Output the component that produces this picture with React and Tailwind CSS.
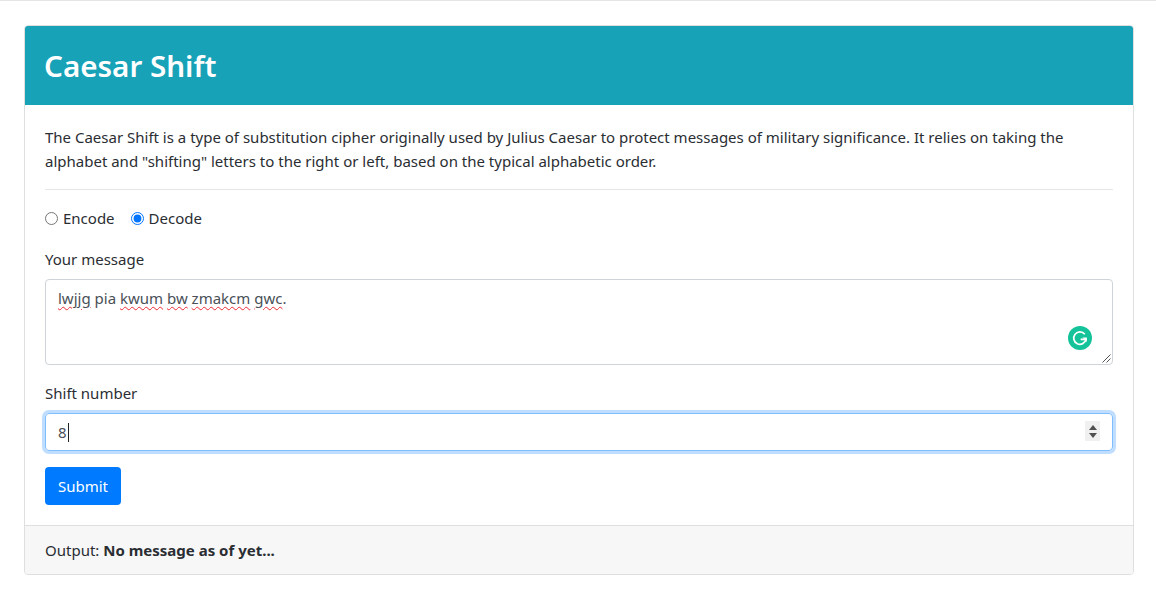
import React from "react"

const wavy = "underline decoration-wavy decoration-[#ee2b36] decoration-[1.2px] underline-offset-[2px]"

const GrammarlyIcon = () => (
  <svg width="24" height="24" viewBox="0 0 24 24" className="absolute right-[20px] top-[46px]">
    <circle cx="12" cy="12" r="12" fill="#15c39a" />
    <path d="M16.8 8.2A6.2 6.2 0 1 0 18 13.4h-5.4" fill="none" stroke="#fff" strokeWidth="1.7" />
    <path d="M14.4 11.6h4.4v4.4z" fill="#fff" />
  </svg>
)

const ResizeHandle = () => (
  <svg width="10" height="10" viewBox="0 0 10 10" className="absolute right-[1px] bottom-[1px]">
    <path d="M1.5 9.5L9.5 1.5M5.5 9.5L9.5 5.5" stroke="#555" strokeWidth="1" fill="none" />
  </svg>
)

const Spinner = () => (
  <div className="absolute right-[12px] top-[7px] flex h-[20px] w-[15px] flex-col items-center justify-center gap-[3px] bg-[#f0f0f0]">
    <svg width="8" height="5" viewBox="0 0 8 5"><path d="M4 0L8 5H0z" fill="#505050" /></svg>
    <svg width="8" height="5" viewBox="0 0 8 5"><path d="M0 0h8L4 5z" fill="#505050" /></svg>
  </div>
)

export default function App() {
  return (
    <div className="min-h-[596px] border-t border-[#e5e5e5] bg-white pl-6 pr-[22px] pt-6 text-[15px] leading-6 text-[#2a2e33] font-['Noto_Sans',sans-serif]">
      <div className="overflow-hidden rounded border border-[#dfdfdf]">
        {/* Header */}
        <div className="flex h-[79px] items-center bg-[#17a2b8] px-5">
          <h1 className="-ml-px text-[29.6px] font-semibold text-white">Caesar Shift</h1>
        </div>

        {/* Body */}
        <div className="px-5 pt-5 pb-5">
          <p>
            The Caesar Shift is a type of substitution cipher originally used by Julius Caesar to protect messages of military significance. It relies on taking the alphabet and "shifting" letters to the right or left, based on the typical alphabetic order.
          </p>
          <hr className="mt-4 mb-4 border-[#e6e6e6]" />

          <div className="flex items-center">
            <label className="flex items-center">
              <input type="radio" name="mode" readOnly className="m-0 h-[13px] w-[13px] accent-[#0075ff]" />
              <span className="ml-[5px]">Encode</span>
            </label>
            <label className="ml-4 flex items-center">
              <input type="radio" name="mode" checked readOnly className="m-0 h-[13px] w-[13px] accent-[#0075ff]" />
              <span className="ml-[5px]">Decode</span>
            </label>
          </div>

          <div className="mt-[17px]">
            <div className="mb-2">Your message</div>
            <div className="relative h-[86px] rounded border border-[#ced4da] px-3 py-[6px] text-[#495057]">
              <span className={wavy}>lwjjg</span> pia <span className={wavy}>kwum</span> <span className={wavy}>bw</span> <span className={wavy}>zmakcm</span> <span className={wavy}>gwc</span>.
              <GrammarlyIcon />
              <ResizeHandle />
            </div>
          </div>

          <div className="mt-4">
            <div className="mb-2">Shift number</div>
            <div className="relative flex h-[38px] items-center rounded border border-[#80bdff] px-3 text-[#495057] shadow-[0_0_0_3px_rgba(0,123,255,0.25)]">
              <span>8</span>
              <span className="ml-[1px] h-[19px] w-px bg-[#222]" />
              <Spinner />
            </div>
          </div>

          <button className="mt-4 h-[38px] w-[76px] rounded bg-[#007bff] text-white">Submit</button>
        </div>

        {/* Footer */}
        <div className="flex h-[49px] items-center border-t border-[#dfdfdf] bg-[#f7f7f7] px-5">
          <span>Output: <strong className="font-bold">No message as of yet...</strong></span>
        </div>
      </div>
    </div>
  )
}
